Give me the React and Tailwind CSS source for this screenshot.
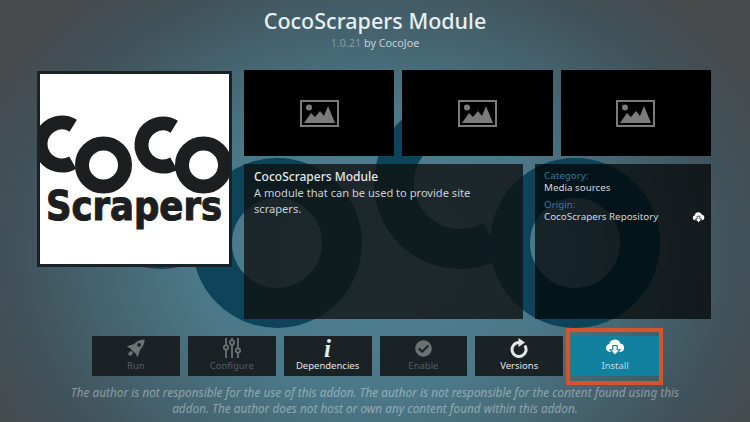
import { FaCheckCircle } from "react-icons/fa";

const font = { fontFamily: '"Noto Sans", "Open Sans", sans-serif' };

function CocoRings() {
  // fan art behind the panels: the same letters as the logo, blown up
  return (
    <svg className="absolute inset-0" width="750" height="422" viewBox="0 0 750 422" fill="none" stroke="#0d4459">
      <circle cx="160" cy="183" r="66" strokeWidth="40" strokeDasharray="276.5 138" transform="rotate(60 160 183)" />
      <circle cx="277" cy="243" r="65" strokeWidth="40" />
      <circle cx="460" cy="183" r="66" strokeWidth="40" strokeDasharray="276.5 138" transform="rotate(60 460 183)" />
      <circle cx="575" cy="243" r="65" strokeWidth="40" />
    </svg>
  );
}

function Logo() {
  return (
    <svg width="189" height="189" viewBox="40 75 189 189" className="block bg-white" role="img" aria-label="CocoScrapers logo">
      <g fill="none" stroke="#1d1e20" strokeWidth="14">
        <circle cx="62" cy="145" r="21.5" strokeDasharray="90 45" transform="rotate(60 62 145)" />
        <circle cx="103.500" cy="166" r="21.500" />
        <circle cx="163" cy="146" r="21.5" strokeDasharray="90 45" transform="rotate(60 163 146)" />
        <circle cx="203.500" cy="166" r="21.500" />
      </g>
      <text x="46" y="221" textLength="176" lengthAdjust="spacingAndGlyphs" fill="#1d1e20" fontSize="41" fontWeight="900" fontFamily='"DejaVu Sans", sans-serif' stroke="#1d1e20" strokeWidth="1.2">Scrapers</text>
    </svg>
  );
}

function Thumb() {
  return (
    <div className="bg-black flex items-center justify-center">
      <svg width="39" height="27" viewBox="0 0 39 27">
        <rect x="1" y="1" width="37" height="25" fill="none" stroke="#7b7b7b" strokeWidth="2" />
        <circle cx="9" cy="7.500" r="3" fill="#7b7b7b" />
        <polygon points="4,23 11,13 15,17 20,11 24,16 28,6 35,23" fill="#7b7b7b" />
      </svg>
    </div>
  );
}

function CloudDown({ size, cut }) {
  return (
    <svg width={size} height={size * 0.86} viewBox="0 0 28 24">
      <path d="M7 18a5.500 5.500 0 0 1-1-10.900 8 8 0 0 1 15.500-1A6 6 0 0 1 21.500 18z" fill="#ffffff" />
      <polygon points="11,9 17,9 17,15 21,15 14,23 7,15 11,15" fill="#ffffff" stroke={cut} strokeWidth="1.600" />
    </svg>
  );
}

function Rocket() {
  return (
    <svg width="22" height="22" viewBox="0 0 20 20" fill="#6f7476">
      <g transform="rotate(45 10 10)">
        <path d="M10 -1C14 3 14.500 9 13 14H7C5.500 9 6 3 10 -1z" />
        <path d="M6.500 8L3 15 6.800 13.800zM13.500 8L17 15 13.200 13.800z" />
        <rect x="8.500" y="15" width="3" height="4" />
        <circle cx="10" cy="6" r="1.700" fill="#1a2226" />
      </g>
    </svg>
  );
}

function Sliders() {
  return (
    <svg width="18" height="22" viewBox="0 0 18 22" fill="none" stroke="#6c7173" strokeWidth="1.800">
      <path d="M3 1v7M3 13v8M9 1v2M9 8v13M15 1v10M15 16v5" />
      <circle cx="3" cy="10.500" r="2.200" />
      <circle cx="9" cy="5.500" r="2.200" />
      <circle cx="15" cy="13.500" r="2.200" />
    </svg>
  );
}

function Versions() {
  return (
    <svg width="18" height="20" viewBox="0 0 18 20" fill="none">
      <path d="M14.800 7.500A7 7 0 1 1 9 4.500" stroke="#e4e7e8" strokeWidth="3" />
      <polygon points="8.500,0 15,4.500 8.500,9" fill="#e4e7e8" />
    </svg>
  );
}

const buttons = [
  { label: "Run", off: true, icon: <Rocket /> },
  { label: "Configure", off: true, icon: <Sliders /> },
  {
    label: "Dependencies",
    icon: <span className="text-[25px] leading-none font-bold italic text-[#e8eaeb]" style={{ fontFamily: '"Liberation Serif", serif' }}>i</span>,
  },
  { label: "Enable", off: true, icon: <FaCheckCircle size={17} color="#6c7173" /> },
  { label: "Versions", icon: <Versions /> },
];

export default function App() {
  return (
    <div className="relative w-[750px] h-[422px] overflow-hidden bg-[radial-gradient(ellipse_60%_85%_at_50%_60%,#4f8298_0%,#4b7888_40%,#40525a_80%,#48494a_100%)]" style={font}>
      <CocoRings />
      <div className="relative">
        <div className="h-[70px] pt-[6px] text-center">
          <h1 className="text-[21.500px] leading-[30px] font-medium text-[#e6f0f3]">CocoScrapers Module</h1>
          <p className="text-[10.800px] leading-[14px] text-[#c6d1d5]"><span className="text-[#7f9ca8]">1.0.21</span> by CocoJoe</p>
        </div>

        <div className="flex gap-[12px] pl-[37px]">
          <div className="w-[195px] h-[196px] mt-px border-[3px] border-[#1a2225] bg-white">
            <Logo />
          </div>
          <div className="w-[467px]">
            <div className="grid grid-cols-3 gap-[8px] h-[86px]">
              <Thumb />
              <Thumb />
              <Thumb />
            </div>
            <div className="flex gap-[12px] mt-[8px] h-[155px]">
              <div className="w-[279px] bg-[#0f0f0f]/78 px-[10px] pt-[5px] text-[11.100px] leading-[16px] text-[#c9d0d3]">
                <div className="text-[12px] font-medium text-[#e4e8ea]">CocoScrapers Module</div>
                <p className="w-[240px]">A module that can be used to provide site scrapers.</p>
              </div>
              <div className="relative w-[176px] bg-black/70 px-[9px] pt-[6px] text-[9.800px] leading-[12px] text-[#d3d8da]">
                <div className="text-[#2a7d9e]">Category:</div>
                <div>Media sources</div>
                <div className="text-[#2a7d9e] mt-[5px]">Origin:</div>
                <div>CocoScrapers Repository</div>
                <div className="absolute right-[6px] top-[48px]">
                  <CloudDown size={13} cut="#141c1f" />
                </div>
              </div>
            </div>
          </div>
        </div>

        <div className="grid grid-cols-6 gap-[8px] w-[567px] ml-[92px] mt-[17px] h-[40px]">
          {buttons.map((b) => (
            <div key={b.label} className="bg-[#1a2226] flex flex-col items-center justify-end pb-[4px]">
              <div className="h-[24px] flex items-center justify-center">{b.icon}</div>
              <div className={`text-[9.500px] leading-[12px] ${b.off ? "text-[#565c60]" : "text-[#e0e4e6]"}`}>{b.label}</div>
            </div>
          ))}
          <div className="relative bg-[#12809f] flex flex-col items-center justify-end pb-[4px]">
            <div className="h-[24px] flex items-center justify-center">
              <CloudDown size={20} cut="#12809f" />
            </div>
            <div className="text-[9.500px] leading-[12px] text-[#bcdce6]">Install</div>
            <div className="absolute -left-[5px] -right-[4px] -top-[8px] -bottom-[9px] border-[4px] border-[#d5532d]" />
          </div>
        </div>

        <p className="w-[620px] mx-auto mt-[8px] text-center italic text-[11.800px] leading-[16px] text-white/40">
          The author is not responsible for the use of this addon. The author is not responsible for the content found using this addon. The author does not host or own any content found within this addon.
        </p>
      </div>
    </div>
  );
}
